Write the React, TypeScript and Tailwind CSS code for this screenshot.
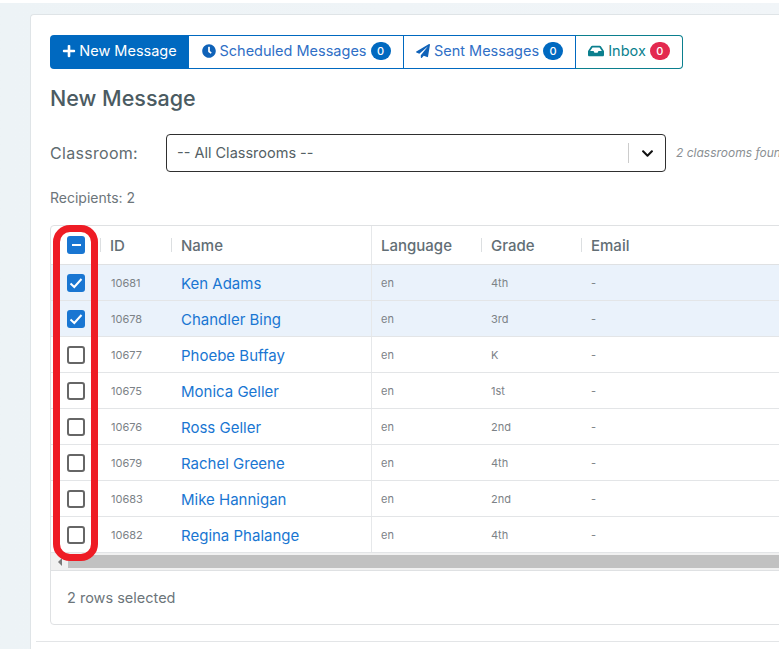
import React from "react";
import { FaPlus, FaClock, FaPaperPlane, FaInbox, FaChevronDown } from "react-icons/fa";

const students = [
  { id: "10681", name: "Ken Adams", grade: "4th", selected: true },
  { id: "10678", name: "Chandler Bing", grade: "3rd", selected: true },
  { id: "10677", name: "Phoebe Buffay", grade: "K", selected: false },
  { id: "10675", name: "Monica Geller", grade: "1st", selected: false },
  { id: "10676", name: "Ross Geller", grade: "2nd", selected: false },
  { id: "10679", name: "Rachel Greene", grade: "4th", selected: false },
  { id: "10683", name: "Mike Hannigan", grade: "2nd", selected: false },
  { id: "10682", name: "Regina Phalange", grade: "4th", selected: false },
];

const Badge = ({ red }: { red?: boolean }) => (
  <span
    className={`flex h-[18px] w-5 items-center justify-center rounded-full text-[11px] font-medium text-white ${
      red ? "bg-[#e3294f]" : "bg-[#0069c0]"
    }`}
  >
    0
  </span>
);

const HeaderCell = ({ label }: { label: string }) => (
  <div className="flex items-center gap-[9px]">
    <span className="h-[14px] w-px shrink-0 bg-[#dcdfe1]" />
    <span className="pt-[2px] text-[15px] font-medium text-[#626e75]">{label}</span>
  </div>
);

const App = () => {
  return (
    <div className="relative h-[649px] w-[779px] overflow-hidden bg-white font-['Inter','Liberation_Sans',sans-serif]">
      <div className="mt-[3px] h-[646px] bg-gradient-to-r from-[#edf3f6] to-[#f1f5f8] pl-[30px] pt-[11px]">
        <div className="h-[635px] w-[800px] rounded-tl border-l border-t border-[#dfe4e7] bg-white pl-[19px] pt-5">
          <div className="flex h-[34px] w-[633px] text-[14.5px]">
            <div className="flex w-[139px] items-center justify-center gap-[3px] rounded-l bg-[#0069c0] pb-[2px] text-white">
              <FaPlus className="text-[14px]" />
              <span>New Message</span>
            </div>
            <div className="flex w-[215px] items-center justify-center gap-1 border-y border-r border-[#0069c0] pb-[2px] text-[#2f6fc6]">
              <FaClock className="text-[14px] text-[#0f62b8]" />
              <span>Scheduled Messages</span>
              <Badge />
            </div>
            <div className="flex w-[172px] items-center justify-center gap-1 border-y border-r border-[#0069c0] pb-[2px] text-[#2f6fc6]">
              <FaPaperPlane className="text-[14px] text-[#0f62b8]" />
              <span>Sent Messages</span>
              <Badge />
            </div>
            <div className="flex w-[107px] items-center justify-center gap-1 rounded-r border-y border-r border-[#0b7f8e] pb-[2px] text-[#0b7f8e]">
              <FaInbox className="text-[16px]" />
              <span>Inbox</span>
              <Badge red />
            </div>
          </div>

          <h1 className="mt-4 text-[21.5px] font-medium leading-[26px] text-[#4b5b62]">New Message</h1>

          <div className="mt-[23px] flex h-[38px] items-center">
            <span className="w-[116px] text-[16px] tracking-[0.3px] text-[#5f6b70]">Classroom:</span>
            <div className="flex h-[38px] w-[500px] items-center rounded border border-[#2f2f2f] pl-[10px]">
              <span className="flex-1 text-[14.5px] text-[#555f65]">-- All Classrooms --</span>
              <span className="h-5 w-px bg-[#cccccc]" />
              <span className="flex w-[36px] justify-center">
                <FaChevronDown className="text-[13px] text-[#111111]" />
              </span>
            </div>
            <span className="ml-[10px] whitespace-nowrap text-[12px] italic text-[#8a8f93]">2 classrooms found</span>
          </div>

          <p className="mt-4 text-sm leading-[20px] text-[#6c757a]">Recipients: 2</p>

          <div className="mt-[17px] h-[400px] w-[780px] rounded border border-[#dfe1e3]">
            <div className="grid h-[39px] grid-cols-[49px_71px_200px_110px_100px_110px] items-center border-b border-[#dfe1e3]">
              <div className="flex justify-center pl-[1px]">
                <span className="flex h-[18px] w-[18px] items-center justify-center rounded-[3px] bg-[#1976d2]">
                  <span className="h-[2px] w-[9px] bg-white" />
                </span>
              </div>
              <HeaderCell label="ID" />
              <HeaderCell label="Name" />
              <div className="flex h-full items-center border-l border-[#e6e8ea] pl-[9px] pt-[2px] text-[15px] font-medium text-[#626e75]">
                Language
              </div>
              <HeaderCell label="Grade" />
              <HeaderCell label="Email" />
            </div>
            {students.map((s) => (
              <div
                key={s.id}
                className={`grid h-9 grid-cols-[49px_71px_200px_110px_100px_110px] items-center border-b border-[#e3e5e7] ${
                  s.selected ? "bg-[#eaf2fb]" : "bg-white"
                }`}
              >
                <div className="flex justify-center pl-[1px]">
                  {s.selected ? (
                    <span className="flex h-[18px] w-[18px] items-center justify-center rounded-[3px] bg-[#1976d2]">
                      <svg viewBox="0 0 18 18" className="h-[18px] w-[18px]" fill="none" stroke="white" strokeWidth="2">
                        <path d="M3.5 9.5 L7.3 13 L14.5 5" />
                      </svg>
                    </span>
                  ) : (
                    <span className="h-[18px] w-[18px] rounded-[3px] border-2 border-[#666666]" />
                  )}
                </div>
                <div className="pl-[11px] pt-[2px] text-[11px] text-[#7c8287]">{s.id}</div>
                <div className="pl-[10px] pt-[3px] text-[15px] text-[#1976d2]">{s.name}</div>
                <div className="flex h-full items-center border-l border-[#e6e8ea] pl-[9px] pt-[2px] text-[11px] text-[#7c8287]">en</div>
                <div className="pl-[10px] pt-[2px] text-[11px] text-[#7c8287]">{s.grade}</div>
                <div className="pl-[10px] pt-[2px] text-[11px] text-[#7c8287]">-</div>
              </div>
            ))}
            <div className="flex h-[18px] items-center border-b border-[#dfe1e3] bg-[#f1f1f1]">
              <span className="flex w-[17px] justify-center">
                <span className="h-0 w-0 border-y-[4px] border-r-[4px] border-y-transparent border-r-[#7a7a7a]" />
              </span>
              <span className="h-[13px] flex-1 bg-[#c1c1c1]" />
            </div>
            <div className="flex h-[53px] items-center pl-4 text-[14.5px] text-[#6c757a]">2 rows selected</div>
          </div>

          <div className="ml-[-14px] mt-4 border-t border-[#e3e5e7]" />
        </div>
      </div>

      <div className="absolute left-[53px] top-[225px] h-[336px] w-[45px] rounded-[17px] border-[7px] border-[#ee1c25]" />
    </div>
  );
};

export default App;
